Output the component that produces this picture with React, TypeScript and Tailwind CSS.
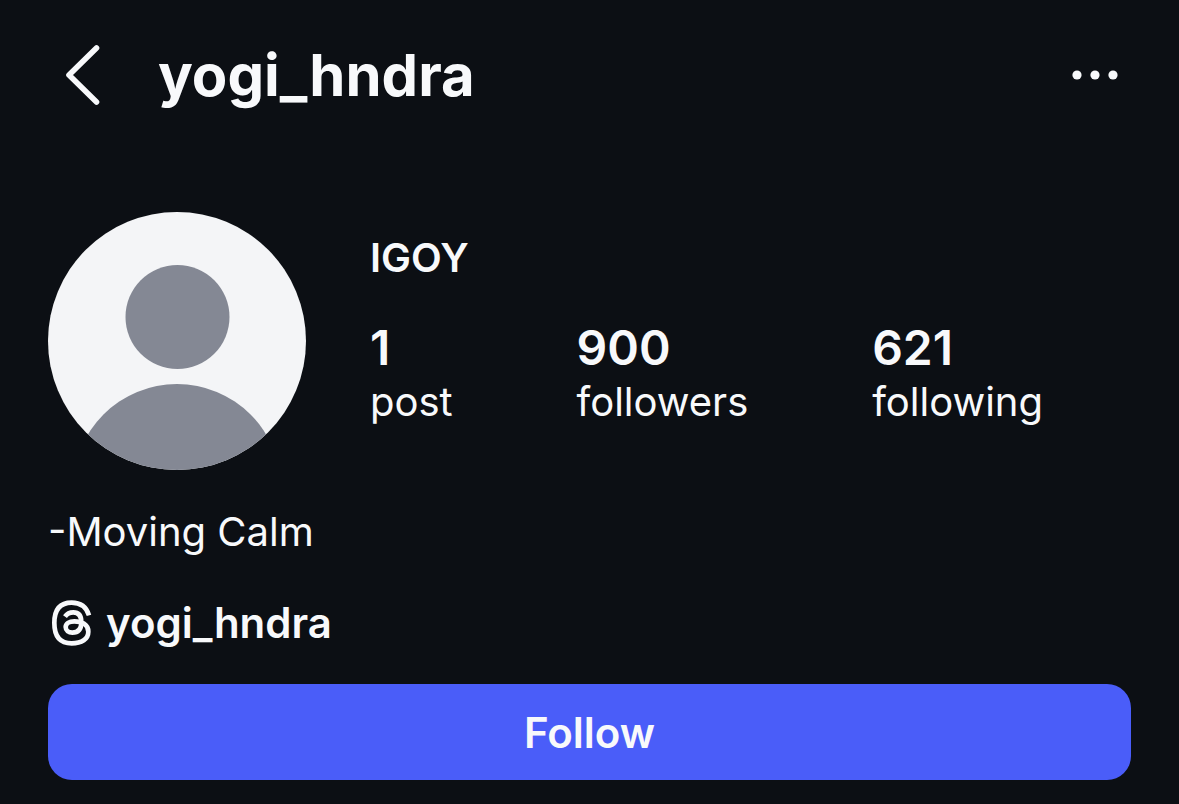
import React from 'react';

interface Stat {
  value: string;
  label: string;
}

const stats: Stat[] = [
  { value: '1', label: 'post' },
  { value: '900', label: 'followers' },
  { value: '621', label: 'following' },
];

const Avatar = () => (
  <svg viewBox="0 0 258 258" className="size-[258px] shrink-0" role="img" aria-label="Profile photo">
    <defs>
      <clipPath id="avatar-clip">
        <circle cx="129" cy="129" r="129" />
      </clipPath>
    </defs>
    <g clipPath="url(#avatar-clip)">
      <rect width="258" height="258" fill="#f4f5f7" />
      <circle cx="129.5" cy="105" r="52" fill="#848894" />
      <circle cx="129" cy="276" r="104" fill="#848894" />
    </g>
  </svg>
);

const ThreadsIcon = () => (
  <svg viewBox="36 31 120 138" className="h-[46px] w-10" fill="none" stroke="currentColor" strokeWidth="14" aria-hidden="true">
    <path d="M147 77C139 51 122 39 95 39C59 39 43 62 43 100C43 138 59 161 95 161C125 161 145 148 145 126C145 104 125 95 103 95C87 95 77 102 77 112C77 122 86 129 97 129C115 129 124 118 124 98C124 78 116 68 100 68C89 68 81 72 75 81" />
  </svg>
);

const App = () => {
  return (
    <main className="min-h-screen bg-[#0c0f14] px-12 pb-6 pt-10 font-['Inter',sans-serif] text-[#f8f9fb]">
      {/* Top bar */}
      <header className="flex h-[70px] items-center">
        <button type="button" aria-label="Back" className="ml-4">
          <svg viewBox="0 0 38 64" className="h-16 w-[38px]" fill="none" stroke="currentColor" strokeWidth="5.6" strokeLinecap="round" strokeLinejoin="round">
            <path d="M32.5 5 5 32l27.5 27" />
          </svg>
        </button>
        <h1 className="ml-14 text-[58px] font-bold leading-[70px]">yogi_hndra</h1>
        <button type="button" aria-label="More options" className="ml-auto mr-3">
          <svg viewBox="0 0 48 12" className="h-3 w-12" fill="currentColor">
            <circle cx="6" cy="6" r="4.6" />
            <circle cx="24" cy="6" r="4.6" />
            <circle cx="42" cy="6" r="4.6" />
          </svg>
        </button>
      </header>

      {/* Photo, name and counts */}
      <section className="mt-[102px] flex gap-16">
        <Avatar />
        <div className="flex flex-1 flex-col pt-5">
          <h2 className="text-[40px] font-semibold leading-[52px]">IGOY</h2>
          <dl className="mt-9 flex justify-between pr-22">
            {stats.map((stat) => (
              <div key={stat.label} className="flex flex-col-reverse">
                <dt className="text-[40px] leading-[52px]">{stat.label}</dt>
                <dd className="text-[48px] font-semibold leading-[56px]">{stat.value}</dd>
              </div>
            ))}
          </dl>
        </div>
      </section>

      {/* Bio */}
      <p className="mt-9 text-[40px] leading-[52px]">-Moving Calm</p>

      <a href="#threads" className="ml-1 mt-10 flex w-fit items-center gap-3.5 text-[42px] font-semibold leading-[50px]">
        <ThreadsIcon />
        yogi_hndra
      </a>

      <button type="button" className="mt-9 h-24 w-full rounded-3xl bg-[#4a5df9] text-[42px] font-semibold">
        Follow
      </button>
    </main>
  );
};

export default App;
